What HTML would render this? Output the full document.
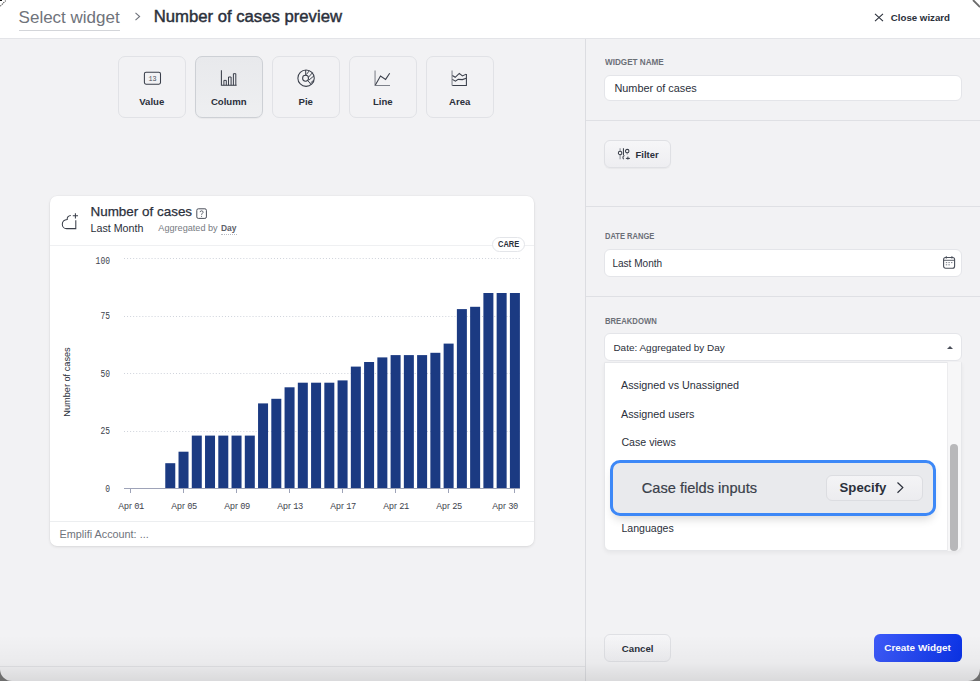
<!DOCTYPE html>
<html><head><meta charset="utf-8"><style>
*{box-sizing:border-box;margin:0;padding:0}
html,body{width:980px;height:681px;overflow:hidden;background:#6e6e6e;font-family:"Liberation Sans",sans-serif;color:#2b303b}
.t{position:absolute;line-height:1;white-space:nowrap}
.a{position:absolute}
#win{position:absolute;left:0;top:0;width:980px;height:681px;border-radius:0 0 12px 12px;overflow:hidden;background:#f2f2f4}
.wbtn{position:absolute;top:56px;width:67.5px;height:61.5px;border:1px solid #e1e2e6;border-radius:7px;background:#f2f2f4}
.wbtn.sel{background:linear-gradient(#e8e9ec,#eeeff1);border-color:#cdd0d5;box-shadow:0 1px 1px rgba(0,0,0,.04)}
.inp{position:absolute;background:#fff;border:1px solid #e4e5e9;border-radius:6px}
.hdiv{position:absolute;left:586px;width:394px;height:1px;background:#dfe0e4}
.btn{position:absolute;border:1px solid #dfe0e4;border-radius:6px;background:linear-gradient(#f6f6f8,#eeeef1)}
</style></head><body>
<div id="win">
<div class="a" style="left:0;top:0;width:980px;height:38px;background:#fff"></div>
<div class="a" style="left:0;top:38px;width:980px;height:1px;background:#e3e4e8"></div>
<div class="t" style="left:18.60px;top:9.11px;font-size:17px;font-weight:400;color:#6f737b;font-family:'Liberation Sans',sans-serif;">Select widget</div>

<div class="a" style="left:18.5px;top:29.5px;width:101.5px;height:1px;background:#d3d5d9"></div>
<svg class="a" style="left:133px;top:11px" width="10" height="11" viewBox="0 0 10 11"><path d="M2.5 1.8 L6.6 5.5 L2.5 9.2" fill="none" stroke="#6f737b" stroke-width="1.1"/></svg>
<div class="t" style="left:153.70px;top:8.96px;font-size:16.7px;font-weight:400;color:#2b303b;font-family:'Liberation Sans',sans-serif;-webkit-text-stroke:0.45px #2b303b;">Number of cases preview</div>

<svg class="a" style="left:873px;top:12px" width="12" height="11" viewBox="0 0 12 11"><path d="M2 1.8 L10 9.2 M10 1.8 L2 9.2" fill="none" stroke="#2b303b" stroke-width="1.1"/></svg>
<div class="t" style="left:890.80px;top:12.59px;font-size:9.7px;font-weight:700;color:#2b303b;font-family:'Liberation Sans',sans-serif;">Close wizard</div>

<div class="a" style="left:585px;top:39px;width:1px;height:642px;background:#dcdde1"></div>
<div class="a" style="left:0;top:666px;width:585px;height:1px;background:#e2e3e6"></div>
<div class="wbtn" style="left:118px"></div>
<div class="t" style="left:118px;width:67.5px;text-align:center;top:96.97px;font-size:9.6px;font-weight:700;color:#2b303b">Value</div>
<div class="wbtn sel" style="left:195px"></div>
<div class="t" style="left:195px;width:67.5px;text-align:center;top:96.97px;font-size:9.6px;font-weight:700;color:#2b303b">Column</div>
<div class="wbtn" style="left:272px"></div>
<div class="t" style="left:272px;width:67.5px;text-align:center;top:96.97px;font-size:9.6px;font-weight:700;color:#2b303b">Pie</div>
<div class="wbtn" style="left:349px"></div>
<div class="t" style="left:349px;width:67.5px;text-align:center;top:96.97px;font-size:9.6px;font-weight:700;color:#2b303b">Line</div>
<div class="wbtn" style="left:426px"></div>
<div class="t" style="left:426px;width:67.5px;text-align:center;top:96.97px;font-size:9.6px;font-weight:700;color:#2b303b">Area</div>
<svg class="a" style="left:140px;top:66px" width="24" height="24" viewBox="0 0 24 24"><rect x="4.4" y="6.3" width="16.1" height="11.9" rx="1.6" fill="none" stroke="#3a3f4a" stroke-width="1.05"/><text x="12.5" y="14.8" font-family="Liberation Mono" font-weight="400" font-size="6.8" text-anchor="middle" fill="#4a4f5a">13</text></svg>
<svg class="a" style="left:217px;top:66px" width="24" height="24" viewBox="0 0 24 24"><path d="M4.4 4.3 V19.3 H19.6" fill="none" stroke="#3a3f4a" stroke-width="1.05"/><path d="M6.9 19.3 V14.4 H9.3 V19.3 M11.5 19.3 V11 H14.1 V19.3 M16.4 19.3 V7.7 H18.8 V19.3" fill="none" stroke="#3a3f4a" stroke-width="1"/></svg>
<svg class="a" style="left:294px;top:66px" width="24" height="24" viewBox="0 0 24 24"><circle cx="12.07" cy="12.16" r="8.2" fill="none" stroke="#3a3f4a" stroke-width="1.05"/><circle cx="11.55" cy="12.25" r="2.95" fill="none" stroke="#3a3f4a" stroke-width="1.05"/><path d="M11.7 4 V9.3 M13.7 14.4 L17.1 18.6" stroke="#3a3f4a" stroke-width="1"/><path d="M12.3 8.6 L15.2 4.9 M14.5 11.2 L18.6 6.6 M14.8 14.2 L19.9 9.9 M16.6 16.9 L19.9 14" stroke="#3a3f4a" stroke-width="0.95"/></svg>
<svg class="a" style="left:371px;top:66px" width="24" height="24" viewBox="0 0 24 24"><path d="M4.05 4.4 V19.5 H19" fill="none" stroke="#7d818a" stroke-width="1.05"/><path d="M4.4 19 L9.5 10 L14.6 13.4 L18.7 7.2" fill="none" stroke="#3a3f4a" stroke-width="1.05"/></svg>
<svg class="a" style="left:448px;top:66px" width="24" height="24" viewBox="0 0 24 24"><path d="M4.05 4.4 V19.4" fill="none" stroke="#7d818a" stroke-width="1.05"/><path d="M4.3 19.4 H18.4 V8" fill="none" stroke="#3a3f4a" stroke-width="1.05"/><path d="M4.4 9.5 L7.2 11.3 L11.3 7.4 L14.4 10 L18.2 8.1" fill="none" stroke="#3a3f4a" stroke-width="1.05"/><path d="M4.4 13.4 L7.4 15.2 L10.2 13.4 L14.4 13.6 L18.2 12.3" fill="none" stroke="#3a3f4a" stroke-width="1.05"/></svg>
<div class="a" style="left:50px;top:196px;width:484px;height:350px;background:#fff;border-radius:7px;box-shadow:0 1px 3px rgba(0,0,0,.10),0 0 0 0.5px rgba(0,0,0,.03)"></div>
<div class="a" style="left:50px;top:245px;width:484px;height:1px;background:#eff0f2"></div>
<div class="a" style="left:50px;top:521px;width:484px;height:1px;background:#eceef0"></div>
<svg class="a" style="left:60px;top:211px" width="20" height="20" viewBox="0 0 20 20"><path d="M10.8 4.5 C8.5 4.6 7 6.2 7.2 8.4 C4.2 8.6 2.3 10.8 2.3 13.2 C2.3 15.7 4.2 17.6 6.6 17.6 H15.8 V9.2" fill="none" stroke="#3a3f4a" stroke-width="1.05"/><path d="M15.4 2.2 V7.4 M12.8 4.8 H18" stroke="#3a3f4a" stroke-width="1.05"/></svg>
<div class="t" style="left:90.50px;top:205.11px;font-size:13.45px;font-weight:400;color:#2b303b;font-family:'Liberation Sans',sans-serif;-webkit-text-stroke:0.25px #2b303b;">Number of cases</div>

<svg class="a" style="left:196px;top:208px" width="11" height="11" viewBox="0 0 11 11"><rect x="0.8" y="0.8" width="9.6" height="9.6" rx="1.5" fill="none" stroke="#4a4f5a" stroke-width="1"/><path d="M4.1 4.1 C4.1 2.4 7.1 2.4 7.1 4.1 C7.1 5.3 5.6 5.3 5.6 6.8" fill="none" stroke="#4a4f5a" stroke-width="0.9"/><circle cx="5.6" cy="8.3" r="0.55" fill="#4a4f5a"/></svg>
<div class="t" style="left:90.50px;top:222.74px;font-size:10.7px;font-weight:400;color:#2b303b;font-family:'Liberation Sans',sans-serif;">Last Month</div>

<div class="t" style="left:158.30px;top:224.05px;font-size:9.15px;font-weight:400;color:#777b83;font-family:'Liberation Sans',sans-serif;">Aggregated by</div>

<div class="t" style="left:221.20px;top:224.27px;font-size:8.9px;font-weight:700;color:#5d6169;font-family:'Liberation Sans',sans-serif;transform:scaleX(0.95);transform-origin:0 0;">Day</div>

<div class="a" style="left:221px;top:233.6px;width:16px;height:1px;border-top:1px dotted #b8bcc4"></div>
<div class="a" style="left:492px;top:237px;width:33px;height:15px;border:1px solid #e3e5e9;border-radius:8px;background:#fff"></div>
<div class="t" style="left:497.60px;top:240.05px;font-size:8.8px;font-weight:700;color:#2b303b;font-family:'Liberation Sans',sans-serif;transform:scaleX(0.85);transform-origin:0 0;">CARE</div>

<svg class="a" style="left:0;top:0" width="980" height="681" viewBox="0 0 980 681"><line x1="124" y1="258.5" x2="520" y2="258.5" stroke="#cfd3db" stroke-width="1" stroke-dasharray="1 2.06"/><line x1="124" y1="316.5" x2="520" y2="316.5" stroke="#cfd3db" stroke-width="1" stroke-dasharray="1 2.06"/><line x1="124" y1="373.5" x2="520" y2="373.5" stroke="#cfd3db" stroke-width="1" stroke-dasharray="1 2.06"/><line x1="124" y1="431.5" x2="520" y2="431.5" stroke="#cfd3db" stroke-width="1" stroke-dasharray="1 2.06"/><rect x="165.27" y="463.20" width="10" height="25.30" fill="#1b3a82"/><rect x="178.52" y="451.70" width="10" height="36.80" fill="#1b3a82"/><rect x="191.78" y="435.60" width="10" height="52.90" fill="#1b3a82"/><rect x="205.03" y="435.60" width="10" height="52.90" fill="#1b3a82"/><rect x="218.29" y="435.60" width="10" height="52.90" fill="#1b3a82"/><rect x="231.54" y="435.60" width="10" height="52.90" fill="#1b3a82"/><rect x="244.80" y="435.60" width="10" height="52.90" fill="#1b3a82"/><rect x="258.05" y="403.40" width="10" height="85.10" fill="#1b3a82"/><rect x="271.31" y="398.80" width="10" height="89.70" fill="#1b3a82"/><rect x="284.56" y="387.30" width="10" height="101.20" fill="#1b3a82"/><rect x="297.82" y="382.70" width="10" height="105.80" fill="#1b3a82"/><rect x="311.07" y="382.70" width="10" height="105.80" fill="#1b3a82"/><rect x="324.33" y="382.70" width="10" height="105.80" fill="#1b3a82"/><rect x="337.58" y="380.40" width="10" height="108.10" fill="#1b3a82"/><rect x="350.84" y="366.60" width="10" height="121.90" fill="#1b3a82"/><rect x="364.09" y="362.00" width="10" height="126.50" fill="#1b3a82"/><rect x="377.35" y="357.40" width="10" height="131.10" fill="#1b3a82"/><rect x="390.60" y="355.10" width="10" height="133.40" fill="#1b3a82"/><rect x="403.86" y="355.10" width="10" height="133.40" fill="#1b3a82"/><rect x="417.11" y="355.10" width="10" height="133.40" fill="#1b3a82"/><rect x="430.37" y="352.80" width="10" height="135.70" fill="#1b3a82"/><rect x="443.62" y="343.60" width="10" height="144.90" fill="#1b3a82"/><rect x="456.88" y="309.10" width="10" height="179.40" fill="#1b3a82"/><rect x="470.13" y="306.80" width="10" height="181.70" fill="#1b3a82"/><rect x="483.39" y="293.00" width="10" height="195.50" fill="#1b3a82"/><rect x="496.64" y="293.00" width="10" height="195.50" fill="#1b3a82"/><rect x="509.90" y="293.00" width="10" height="195.50" fill="#1b3a82"/><line x1="124" y1="488.5" x2="520" y2="488.5" stroke="#9ea3b8" stroke-width="1"/><line x1="130.5" y1="488" x2="130.5" y2="493" stroke="#9ea3b8" stroke-width="1"/><line x1="183.5" y1="488" x2="183.5" y2="493" stroke="#9ea3b8" stroke-width="1"/><line x1="236.5" y1="488" x2="236.5" y2="493" stroke="#9ea3b8" stroke-width="1"/><line x1="289.5" y1="488" x2="289.5" y2="493" stroke="#9ea3b8" stroke-width="1"/><line x1="342.5" y1="488" x2="342.5" y2="493" stroke="#9ea3b8" stroke-width="1"/><line x1="395.5" y1="488" x2="395.5" y2="493" stroke="#9ea3b8" stroke-width="1"/><line x1="448.5" y1="488" x2="448.5" y2="493" stroke="#9ea3b8" stroke-width="1"/><line x1="514.5" y1="488" x2="514.5" y2="493" stroke="#9ea3b8" stroke-width="1"/></svg>
<div class="t" style="left:60px;width:50px;text-align:right;top:256.94px;font-size:10px;color:#3e434d;font-family:'Liberation Mono',monospace;transform:scaleX(0.8);transform-origin:100% 0">100</div>
<div class="t" style="left:60px;width:50px;text-align:right;top:312.14px;font-size:10px;color:#3e434d;font-family:'Liberation Mono',monospace;transform:scaleX(0.8);transform-origin:100% 0">75</div>
<div class="t" style="left:60px;width:50px;text-align:right;top:369.64px;font-size:10px;color:#3e434d;font-family:'Liberation Mono',monospace;transform:scaleX(0.8);transform-origin:100% 0">50</div>
<div class="t" style="left:60px;width:50px;text-align:right;top:427.14px;font-size:10px;color:#3e434d;font-family:'Liberation Mono',monospace;transform:scaleX(0.8);transform-origin:100% 0">25</div>
<div class="t" style="left:60px;width:50px;text-align:right;top:484.64px;font-size:10px;color:#3e434d;font-family:'Liberation Mono',monospace;transform:scaleX(0.8);transform-origin:100% 0">0</div>
<div class="t" style="left:100.50px;width:60px;text-align:center;top:501.09px;font-size:9.7px;color:#3e434d;transform:scaleX(0.9);transform-origin:50% 0">Apr <span style="font-family:'Liberation Mono',monospace;letter-spacing:-0.6px">01</span></div>
<div class="t" style="left:153.52px;width:60px;text-align:center;top:501.09px;font-size:9.7px;color:#3e434d;transform:scaleX(0.9);transform-origin:50% 0">Apr <span style="font-family:'Liberation Mono',monospace;letter-spacing:-0.6px">05</span></div>
<div class="t" style="left:206.54px;width:60px;text-align:center;top:501.09px;font-size:9.7px;color:#3e434d;transform:scaleX(0.9);transform-origin:50% 0">Apr <span style="font-family:'Liberation Mono',monospace;letter-spacing:-0.6px">09</span></div>
<div class="t" style="left:259.56px;width:60px;text-align:center;top:501.09px;font-size:9.7px;color:#3e434d;transform:scaleX(0.9);transform-origin:50% 0">Apr <span style="font-family:'Liberation Mono',monospace;letter-spacing:-0.6px">13</span></div>
<div class="t" style="left:312.58px;width:60px;text-align:center;top:501.09px;font-size:9.7px;color:#3e434d;transform:scaleX(0.9);transform-origin:50% 0">Apr <span style="font-family:'Liberation Mono',monospace;letter-spacing:-0.6px">17</span></div>
<div class="t" style="left:365.60px;width:60px;text-align:center;top:501.09px;font-size:9.7px;color:#3e434d;transform:scaleX(0.9);transform-origin:50% 0">Apr <span style="font-family:'Liberation Mono',monospace;letter-spacing:-0.6px">21</span></div>
<div class="t" style="left:418.62px;width:60px;text-align:center;top:501.09px;font-size:9.7px;color:#3e434d;transform:scaleX(0.9);transform-origin:50% 0">Apr <span style="font-family:'Liberation Mono',monospace;letter-spacing:-0.6px">25</span></div>
<div class="t" style="left:474.65px;width:60px;text-align:center;top:501.09px;font-size:9.7px;color:#3e434d;transform:scaleX(0.9);transform-origin:50% 0">Apr <span style="font-family:'Liberation Mono',monospace;letter-spacing:-0.6px">30</span></div>
<div class="t" style="left:67.6px;top:382.2px;font-size:9.2px;color:#2b303b;transform:translate(-50%,-50%) rotate(-90deg)">Number of cases</div>
<div class="t" style="left:59.60px;top:528.72px;font-size:10.84px;font-weight:400;color:#6f737b;font-family:'Liberation Sans',sans-serif;">Emplifi Account: ...</div>

<div class="hdiv" style="top:120px"></div>
<div class="hdiv" style="top:206px"></div>
<div class="hdiv" style="top:296px"></div>
<div class="t" style="left:604.80px;top:57.87px;font-size:8.3px;font-weight:700;color:#6b6f77;font-family:'Liberation Sans',sans-serif;transform:scaleX(0.98);transform-origin:0 0;">WIDGET NAME</div>

<div class="inp" style="left:604px;top:75px;width:358px;height:26px"></div>
<div class="t" style="left:614.40px;top:82.87px;font-size:10.9px;font-weight:400;color:#2b303b;font-family:'Liberation Sans',sans-serif;">Number of cases</div>

<div class="btn" style="left:604px;top:140px;width:67px;height:28px;box-shadow:0 1px 1px rgba(0,0,0,.04)"></div>
<svg class="a" style="left:612px;top:142px" width="24" height="24" viewBox="0 0 24 24"><path d="M8.1 6.3 V17.3" stroke="#8a8e96" stroke-width="1.05"/><circle cx="8.1" cy="10.9" r="1.75" fill="#f3f3f5" stroke="#3a3f4a" stroke-width="1.05"/><path d="M11.45 6.3 V13.1" stroke="#3a3f4a" stroke-width="1.05"/><path d="M12.4 13.4 C10.6 13.9 10.6 15.9 11.6 17.2" fill="none" stroke="#3a3f4a" stroke-width="1.05"/><circle cx="15.2" cy="9.1" r="1.75" fill="none" stroke="#3a3f4a" stroke-width="1.05"/><path d="M15.2 10.9 V12.6" stroke="#8a8e96" stroke-width="1.05"/><path d="M13.9 16.4 H17.9 M15.9 14.6 V17.6" stroke="#3a3f4a" stroke-width="1"/></svg>
<div class="t" style="left:635.50px;top:149.70px;font-size:9.45px;font-weight:700;color:#2b303b;font-family:'Liberation Sans',sans-serif;">Filter</div>

<div class="t" style="left:604.80px;top:232.07px;font-size:8.3px;font-weight:700;color:#6b6f77;font-family:'Liberation Sans',sans-serif;transform:scaleX(0.91);transform-origin:0 0;">DATE RANGE</div>

<div class="inp" style="left:604px;top:249px;width:358px;height:28px"></div>
<div class="t" style="left:612.40px;top:259.48px;font-size:10.07px;font-weight:400;color:#2b303b;font-family:'Liberation Sans',sans-serif;">Last Month</div>

<svg class="a" style="left:942px;top:255px" width="14" height="15" viewBox="0 0 14 15"><rect x="1.6" y="2.5" width="11" height="10.8" rx="2" fill="none" stroke="#4a4f5a" stroke-width="1.1"/><path d="M1.6 5.3 H12.6" stroke="#4a4f5a" stroke-width="0.9"/><path d="M4.3 1.3 V3.5 M9.9 1.3 V3.5" stroke="#4a4f5a" stroke-width="1.1"/><path d="M3.8 7.6 H5.2 M6.4 7.6 H7.8 M9 7.6 H10.4 M3.8 9.8 H5.2 M6.4 9.8 H7.8" stroke="#6a6f7a" stroke-width="0.9"/></svg>
<div class="t" style="left:604.80px;top:316.77px;font-size:8.3px;font-weight:700;color:#6b6f77;font-family:'Liberation Sans',sans-serif;transform:scaleX(0.927);transform-origin:0 0;">BREAKDOWN</div>

<div class="inp" style="left:604px;top:333px;width:358px;height:28px"></div>
<div class="t" style="left:613.40px;top:342.96px;font-size:9.97px;font-weight:400;color:#2b303b;font-family:'Liberation Sans',sans-serif;">Date: Aggregated by Day</div>

<svg class="a" style="left:945px;top:344px" width="10" height="7" viewBox="0 0 10 7"><path d="M2 5 L5 2 L8 5 Z" fill="#4a4f5a"/></svg>
<div class="a" style="left:604px;top:362px;width:358px;height:189px;background:#fff;border:1px solid #e6e7ea;border-radius:0 0 6px 6px;box-shadow:0 2px 4px rgba(0,0,0,.05)"></div>
<div class="a" style="left:947px;top:362px;width:14px;height:189px;background:#f7f7f8;border-left:1px solid #ececee;border-radius:0 0 6px 0"></div>
<div class="a" style="left:950px;top:444px;width:8px;height:107px;background:#b8b8ba;border-radius:4px"></div>
<div class="t" style="left:621.00px;top:380.48px;font-size:10.77px;font-weight:400;color:#2b303b;font-family:'Liberation Sans',sans-serif;">Assigned vs Unassigned</div>

<div class="t" style="left:621.00px;top:408.60px;font-size:10.75px;font-weight:400;color:#2b303b;font-family:'Liberation Sans',sans-serif;">Assigned users</div>

<div class="t" style="left:621.40px;top:437.19px;font-size:10.64px;font-weight:400;color:#2b303b;font-family:'Liberation Sans',sans-serif;">Case views</div>

<div class="t" style="left:621.40px;top:522.84px;font-size:10.59px;font-weight:400;color:#2b303b;font-family:'Liberation Sans',sans-serif;">Languages</div>

<div class="a" style="left:610px;top:460px;width:326px;height:56px;background:#e9eaed;border:3px solid #3d88f7;border-radius:10px;box-shadow:0 6px 10px -3px rgba(0,0,0,.16)"></div>
<div class="t" style="left:641.80px;top:480.54px;font-size:14.6px;font-weight:400;color:#3a3f4a;font-family:'Liberation Sans',sans-serif;-webkit-text-stroke:0.2px #3a3f4a;">Case fields inputs</div>

<div class="btn" style="left:826px;top:475px;width:97px;height:26px;border-color:#dcdde1;background:linear-gradient(#f4f4f6,#ececef)"></div>
<div class="t" style="left:839.60px;top:481.06px;font-size:13.16px;font-weight:700;color:#2b303b;font-family:'Liberation Sans',sans-serif;">Specify</div>

<svg class="a" style="left:894px;top:480px" width="12" height="15" viewBox="0 0 12 15"><path d="M3.5 2.5 L8.8 7.6 L3.5 12.7" fill="none" stroke="#2b303b" stroke-width="1.2"/></svg>
<div class="btn" style="left:604px;top:634px;width:67px;height:28px"></div>
<div class="t" style="left:621.80px;top:643.61px;font-size:9.67px;font-weight:700;color:#2b303b;font-family:'Liberation Sans',sans-serif;">Cancel</div>

<div class="a" style="left:874px;top:634px;width:88px;height:28px;border-radius:6px;background:linear-gradient(100deg,#3d5af8,#0b33e6)"></div>
<div class="t" style="left:884.30px;top:643.30px;font-size:9.92px;font-weight:700;color:#ffffff;font-family:'Liberation Sans',sans-serif;">Create Widget</div>

<div class="a" style="left:0;top:635px;width:980px;height:46px;background:linear-gradient(rgba(0,0,0,0),rgba(0,0,0,.03) 60%,rgba(0,0,0,.1));pointer-events:none"></div>
</div>
<svg class="a" style="left:0;top:0" width="12" height="12" viewBox="0 0 12 12"><path d="M0 0 H2 V1 H0 Z" fill="#111"/><path d="M0.3 6.2 L6 0.3" stroke="#555" stroke-width="1.1" stroke-dasharray="1.3 0.9"/></svg>
<svg class="a" style="left:968px;top:0" width="12" height="12" viewBox="0 0 12 12"><path d="M5 0 L12 7" stroke="#6a6a6a" stroke-width="1.8"/></svg>
</body></html>
